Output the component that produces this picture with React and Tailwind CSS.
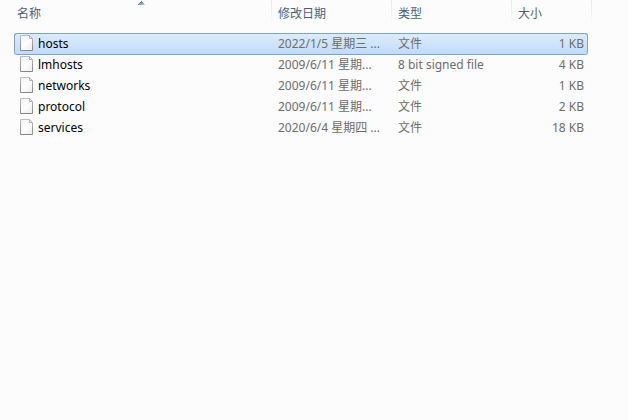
import React, { useState } from 'react'

const files = [
  { name: 'hosts', date: '2022/1/5 星期三 ...', type: '文件', size: '1 KB' },
  { name: 'lmhosts', date: '2009/6/11 星期...', type: '8 bit signed file', size: '4 KB' },
  { name: 'networks', date: '2009/6/11 星期...', type: '文件', size: '1 KB' },
  { name: 'protocol', date: '2009/6/11 星期...', type: '文件', size: '2 KB' },
  { name: 'services', date: '2020/6/4 星期四 ...', type: '文件', size: '18 KB' },
]

const FileIcon = () => (
  <svg className="h-4 w-[13px] shrink-0" viewBox="0 0 13 16" fill="none" aria-hidden="true">
    <defs>
      <linearGradient id="paper" x1="0" y1="0" x2="1" y2="1">
        <stop offset="0" stopColor="#f1f1f1" />
        <stop offset="0.5" stopColor="#fdfdfd" />
        <stop offset="1" stopColor="#ececec" />
      </linearGradient>
      <linearGradient id="edge" x1="0" y1="0" x2="0" y2="1">
        <stop offset="0" stopColor="#bcbcbc" />
        <stop offset="1" stopColor="#868686" />
      </linearGradient>
    </defs>
    <path d="M.5 .5H9.5L12.5 3.5V15.5H.5Z" fill="url(#paper)" stroke="url(#edge)" />
    <path d="M9.5 .5V3.5H12.5" stroke="#b0b0b0" />
  </svg>
)

const SortArrow = () => (
  <svg className="h-1 w-[7px]" viewBox="0 0 7 4" aria-hidden="true">
    <defs>
      <linearGradient id="arrow" x1="0" y1="0" x2="1" y2="1">
        <stop offset="0.2" stopColor="#2c5a78" />
        <stop offset="0.55" stopColor="#6fa8c6" />
        <stop offset="1" stopColor="#bfe4f5" />
      </linearGradient>
    </defs>
    <path d="M3 0H4V1H5V2H6V3H7V4H0V3H1V2H2V1H3Z" fill="url(#arrow)" />
  </svg>
)

const Heading = ({ children, sorted, className, colSpan }) => (
  <th
    scope="col"
    colSpan={colSpan}
    aria-sort={sorted ? 'ascending' : undefined}
    className={`relative h-6 p-0 text-left font-normal text-[#4c607a] bg-linear-to-b from-[#dce8f4] to-transparent bg-[length:1px_100%] bg-right bg-no-repeat ${className}`}
  >
    {sorted && (
      <span className="absolute inset-x-0 top-px flex justify-center pr-[3px]"><SortArrow /></span>
    )}
    <button className="block w-full pt-1 text-left leading-5">{children}</button>
  </th>
)

const FileRow = ({ file, selected, onSelect }) => {
  const cell = selected
    ? 'h-[21px] p-0 border-t border-[#7da2ce] bg-linear-to-b from-[#dcebfc] to-[#c1dbfc] shadow-[0_1px_0_#7da2ce]'
    : 'h-[21px] p-0 border-t border-transparent'
  return (
    <tr onClick={onSelect} aria-selected={selected}>
      <td className={`${cell} border-l rounded-l-[3px] pl-[5px]`}>
        <div className="flex h-5 items-start gap-[5px] pt-px text-black">
          <FileIcon />
          <span className="leading-[18px]">{file.name}</span>
        </div>
      </td>
      <td className={`${cell} pl-1.5`}>{file.date}</td>
      <td className={`${cell} pl-1.5`}>{file.type}</td>
      <td className={`${cell} border-r rounded-r-[3px] pr-[3px] text-right`}>{file.size}</td>
      <td className="p-0"></td>
    </tr>
  )
}

export default function App() {
  const [selected, setSelected] = useState('hosts')

  return (
    <main className="min-h-screen bg-[#fcfcfc] pl-3.5 pr-9 font-['Noto_Sans','Noto_Sans_CJK_SC',sans-serif]">
      <table className="w-full table-fixed border-separate border-spacing-0 whitespace-nowrap text-xs leading-5 text-[#6d6d6d]">
        <colgroup>
          <col />
          <col className="w-[120px]" />
          <col className="w-[120px]" />
          <col className="w-[76px]" />
          <col className="w-1" />
        </colgroup>
        <thead>
          <tr>
            <Heading sorted className="pl-[3px]">名称</Heading>
            <Heading className="pl-1.5">修改日期</Heading>
            <Heading className="pl-1.5">类型</Heading>
            <Heading className="pl-1.5" colSpan={2}>大小</Heading>
          </tr>
        </thead>
        <tbody>
          <tr aria-hidden="true"><td colSpan={5} className="h-[9px] p-0"></td></tr>
          {files.map(f => (
            <FileRow key={f.name} file={f} selected={f.name === selected} onSelect={() => setSelected(f.name)} />
          ))}
        </tbody>
      </table>
    </main>
  )
}
